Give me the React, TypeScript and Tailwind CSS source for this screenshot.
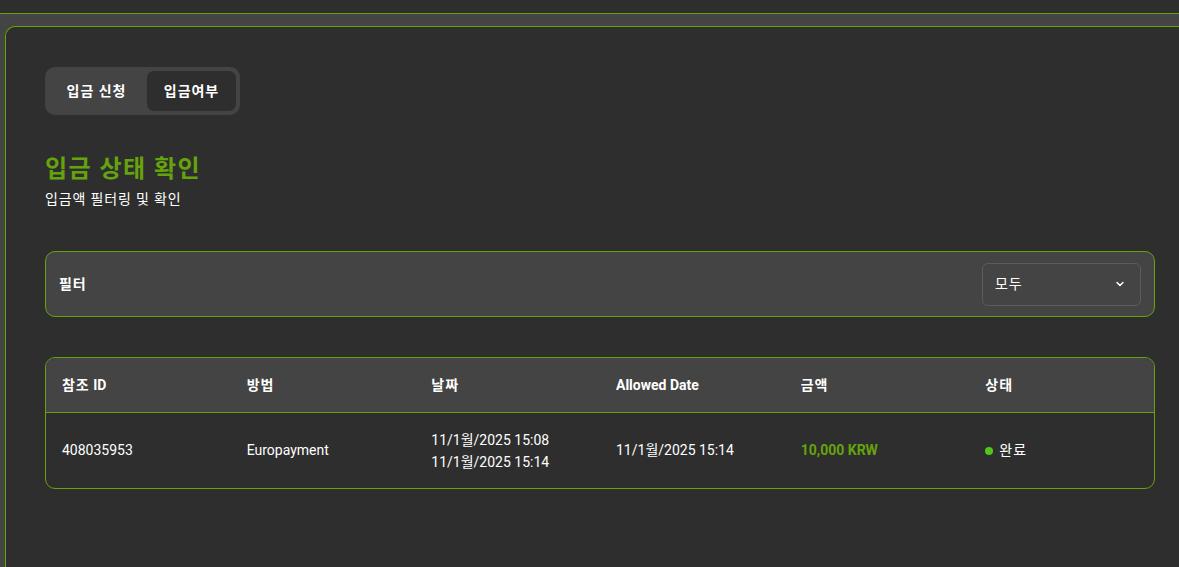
import React from "react";

const font = { fontFamily: "Roboto, 'Noto Sans CJK KR', sans-serif" };

const K = ({ children }: { children: React.ReactNode }) => (
  <span className="tracking-[0.07em]">{children}</span>
);

export default function App() {
  const cols: React.ReactNode[] = [
    <><K>참조</K> ID</>,
    <K>방법</K>,
    <K>날짜</K>,
    "Allowed Date",
    <K>금액</K>,
    <K>상태</K>,
  ];
  return (
    <div className="w-[1179px] h-[567px] overflow-hidden bg-[#2e2e2e] text-white" style={font}>
      <div className="h-[13px]" />
      <div className="border-t border-[#65a30d] bg-[#444444] pt-[12px] pl-[5px] h-[554px]">
        <div className="h-full w-[1300px] border-l border-t border-[#65a30d] rounded-tl-[10px] bg-[#2e2e2e] pl-[39px] pt-[40px]">
          <div className="flex w-[195px] h-[48px] p-[4px] rounded-[10px] bg-[#444444] text-[14px] font-bold">
            <div className="w-[98px] flex items-center justify-center pr-[3px]"><K>입금 신청</K></div>
            <div className="w-[89px] flex items-center justify-center rounded-[7px] bg-[#2e2e2e]"><K>입금여부</K></div>
          </div>
          <h1 className="mt-[38px] text-[24px] leading-[32px] font-bold text-[#65a30d] tracking-[0.06em]">입금 상태 확인</h1>
          <p className="mt-[4px] text-[14px] leading-[20px] tracking-[0.06em]">입금액 필터링 및 확인</p>

          <div className="mt-[42px] w-[1110px] h-[66px] rounded-[10px] border border-[#65a30d] bg-[#444444] flex items-center justify-between px-[13px]">
            <span className="text-[14px] font-bold"><K>필터</K></span>
            <div className="w-[159px] h-[43px] rounded-[6px] border border-[#5c5c5c] flex items-center justify-between pl-[12px] pr-[14px] text-[14px]">
              <K>모두</K>
              <svg width="12" height="12" viewBox="0 0 24 24" fill="none" stroke="white" strokeWidth="3" strokeLinecap="round" strokeLinejoin="round">
                <path d="M6 9l6 6 6-6" />
              </svg>
            </div>
          </div>

          <div className="mt-[40px] w-[1110px] rounded-[10px] border border-[#65a30d] overflow-hidden">
            <div className="grid grid-cols-6 h-[55px] items-center bg-[#444444] border-b border-[#65a30d] text-[14px] font-bold">
              {cols.map((c, i) => (
                <div key={i} className="pl-[16px]">{c}</div>
              ))}
            </div>
            <div className="grid grid-cols-6 h-[75px] items-center text-[14px]">
              <div className="pl-[16px]">408035953</div>
              <div className="pl-[16px]">Europayment</div>
              <div className="pl-[16px] leading-[22px]">
                <div>11/1월/2025 15:08</div>
                <div>11/1월/2025 15:14</div>
              </div>
              <div className="pl-[16px]">11/1월/2025 15:14</div>
              <div className="pl-[16px] font-bold text-[#65a30d]">10,000 KRW</div>
              <div className="pl-[16px] flex items-center gap-[6px]">
                <span className="w-[8px] h-[8px] rounded-full bg-[#52c41a]" />
                <K>완료</K>
              </div>
            </div>
          </div>
        </div>
      </div>
    </div>
  );
}
